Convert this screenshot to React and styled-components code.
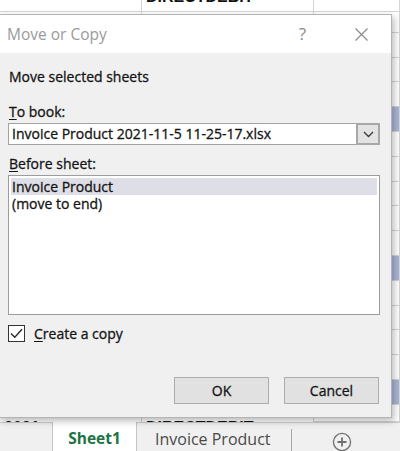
import styled, { createGlobalStyle } from 'styled-components';

const GlobalStyle = createGlobalStyle`
   body {
      margin: 0;
      background: #ffffff;
      font-family: 'Open Sans', 'Noto Sans', sans-serif;
   }
`;

// row heights of the worksheet behind the dialog
const rows = [
   { h: 25, b: 'DIRECTDEBIT', bold: true, up: true },
   { h: 20.8 },
   { h: 24.8 },
   { h: 24.8 },
   { h: 24.8 },
   { h: 24.8, blue: true },
   { h: 24.8 },
   { h: 24.8 },
   { h: 24.8 },
   { h: 24.8 },
   { h: 24.8 },
   { h: 24.8, blue: true },
   { h: 24.8 },
   { h: 24.8 },
   { h: 24.8 },
   { h: 24.8 },
   { h: 24.8, blue: true },
   { h: 17.2, a: '2021', b: 'DIRECTDEBIT', low: true }
];

const sheets = ['Invoice Product', '(move to end)'];

export default function App() {
   return (
      <>
         <GlobalStyle />
         <Page>
            <Sheet>
               <Grid>
                  {rows.map((r, i) => (
                     <Row key={i} style={{ height: r.h }}>
                        <Cell $low={r.low}>{r.a}</Cell>
                        <Cell $bold={r.bold} $low={r.low} $up={r.up}>
                           {r.b}
                        </Cell>
                        <Cell $blue={r.blue} />
                     </Row>
                  ))}
               </Grid>
            </Sheet>

            <TabBar>
               <TabSpacer />
               <ActiveTab>Sheet1</ActiveTab>
               <Tab>Invoice Product</Tab>
               <TabSeparator />
               <AddSheet>
                  <svg width="20" height="20" viewBox="0 0 20 20">
                     <circle cx="10" cy="10" r="8.6" fill="none" stroke="#6f6f6f" strokeWidth="1.3" />
                     <path d="M10 5.5v9M5.5 10h9" stroke="#6f6f6f" strokeWidth="1.8" />
                  </svg>
               </AddSheet>
            </TabBar>

            <Dialog>
               <TitleBar>
                  <Title>Move or Copy</Title>
                  <Help>?</Help>
                  <CloseIcon width="13" height="13" viewBox="0 0 13 13">
                     <path d="M0.5 0.5l12 12M12.5 0.5l-12 12" stroke="#8a8a8a" strokeWidth="1.2" />
                  </CloseIcon>
               </TitleBar>

               <Body>
                  <Label $top={15}>Move selected sheets</Label>
                  <Label $top={17}>
                     <u>T</u>o book:
                  </Label>
                  <Combo>
                     <ComboText>Invoice Product 2021-11-5 11-25-17.xlsx</ComboText>
                     <ComboButton>
                        <svg width="11" height="7" viewBox="0 0 11 7">
                           <path d="M1 1l4.5 4.5L10 1" fill="none" stroke="#3c3c3c" strokeWidth="1.4" />
                        </svg>
                     </ComboButton>
                  </Combo>

                  <Label $top={10}>
                     <u>B</u>efore sheet:
                  </Label>
                  <ListBox>
                     {sheets.map((s, i) => (
                        <ListItem key={s} $selected={i === 0}>
                           {s}
                        </ListItem>
                     ))}
                  </ListBox>

                  <CheckRow>
                     <CheckBox>
                        <svg width="13" height="11" viewBox="0 0 13 11">
                           <path d="M1 5.5l3.8 3.8L12 1.2" fill="none" stroke="#262626" strokeWidth="1.3" />
                        </svg>
                     </CheckBox>
                     <CheckLabel>
                        <u>C</u>reate a copy
                     </CheckLabel>
                  </CheckRow>

                  <Buttons>
                     <Button>OK</Button>
                     <Button>Cancel</Button>
                  </Buttons>
               </Body>
            </Dialog>
         </Page>
      </>
   );
}

const Page = styled.div`
   position: relative;
   width: 400px;
   height: 451px;
   overflow: hidden;
   background: #ffffff;
`;

const Sheet = styled.div`
   height: 422px;
   overflow: hidden;
`;

const Grid = styled.div`
   margin-top: -13px;
`;

const Row = styled.div`
   display: grid;
   grid-template-columns: 142px 172px 1fr;
   box-sizing: border-box;
   overflow: hidden;
`;

const Cell = styled.div`
   box-sizing: border-box;
   border-right: 1px solid #d4d4d4;
   border-bottom: ${(p) => (p.$low ? 'none' : '1px solid #d4d4d4')};
   padding: ${(p) => (p.$low ? '14px 0 0 4px' : '0 0 0 4px')};
   display: flex;
   align-items: ${(p) => (p.$low ? 'flex-start' : 'center')};
   overflow: hidden;
   white-space: nowrap;
   font-family: 'Liberation Sans', sans-serif;
   font-size: 16px;
   line-height: 18px;
   font-weight: ${(p) => (p.$bold || p.$low ? 700 : 400)};
   color: #111111;
   background: ${(p) => (p.$blue ? '#aab6d8' : 'transparent')};
   margin-top: ${(p) => (p.$up ? '-5px' : '0')};
`;

const TabBar = styled.div`
   display: flex;
   align-items: stretch;
   height: 29px;
   box-sizing: border-box;
   border-top: 1px solid #cdcdcd;
   background: #f0f0f0;
`;

const TabSpacer = styled.div`
   width: 52px;
`;

const ActiveTab = styled.div`
   box-sizing: border-box;
   width: 85px;
   margin-top: -1px;
   padding-top: 6px;
   text-align: center;
   background: #ffffff;
   border-left: 1px solid #c4c4c4;
   border-right: 1px solid #c4c4c4;
   font-size: 15.5px;
   font-weight: 700;
   line-height: 20px;
   color: #217346;
`;

const Tab = styled.div`
   box-sizing: border-box;
   width: 154px;
   padding: 6px 0 0 18px;
   font-size: 16px;
   line-height: 20px;
   color: #4a4a4a;
`;

const TabSeparator = styled.div`
   width: 1px;
   margin-top: 6px;
   background: #a8a8a8;
`;

const AddSheet = styled.div`
   margin: 9px 0 0 40px;
   width: 20px;
   height: 20px;
`;

const Dialog = styled.div`
   position: absolute;
   left: -2px;
   top: 14px;
   width: 394px;
   height: 404px;
   box-sizing: border-box;
   border: 1px solid #b4b4b4;
   background: #f0f0f0;
   box-shadow: 2px 3px 7px rgba(0, 0, 0, 0.28);
   display: flex;
   flex-direction: column;
`;

const TitleBar = styled.div`
   height: 38px;
   display: flex;
   align-items: center;
   background: #ffffff;
   padding: 0 23px 0 8px;
`;

const Title = styled.div`
   flex: 1;
   font-size: 15.5px;
   color: #9a9a9a;
`;

const Help = styled.div`
   font-size: 17px;
   color: #8a8a8a;
   margin-right: 49px;
   margin-top: -2px;
`;

const CloseIcon = styled.svg`
   display: block;
`;

const Body = styled.div`
   flex: 1;
   display: flex;
   flex-direction: column;
   padding: 0 11px 0 9px;
   color: #141414;
   font-size: 14px;
   -webkit-text-stroke: 0.3px #141414;
`;

const Label = styled.div`
   margin-top: ${(p) => p.$top}px;
   padding-left: 1px;
   line-height: 18px;

   u {
      text-underline-offset: 2px;
   }
`;

const Combo = styled.div`
   display: flex;
   height: 22px;
   margin-top: 2px;
   box-sizing: border-box;
   border: 1px solid #a3a3a3;
   background: #ffffff;
`;

const ComboText = styled.div`
   flex: 1;
   padding-left: 3px;
   line-height: 20px;
   white-space: nowrap;
   overflow: hidden;
`;

const ComboButton = styled.div`
   width: 24px;
   box-sizing: border-box;
   margin: -1px -1px -1px 0;
   border: 2px solid #a8a8a8;
   background: #e3e3e3;
   display: flex;
   align-items: center;
   justify-content: center;
`;

const ListBox = styled.div`
   height: 140px;
   margin-top: 2px;
   box-sizing: border-box;
   border: 1px solid #9c9c9c;
   background: #ffffff;
   padding: 2px;
`;

const ListItem = styled.div`
   height: 17px;
   line-height: 17px;
   padding-left: 1px;
   background: ${(p) => (p.$selected ? '#dedee6' : 'transparent')};
`;

const CheckRow = styled.div`
   display: flex;
   align-items: center;
   margin-top: 10px;
   height: 17px;
`;

const CheckBox = styled.div`
   width: 17px;
   height: 17px;
   box-sizing: border-box;
   border: 1px solid #333333;
   background: #ffffff;
   display: flex;
   align-items: center;
   justify-content: center;
`;

const CheckLabel = styled.div`
   margin-left: 9px;
   line-height: 18px;

   u {
      text-underline-offset: 2px;
   }
`;

const Buttons = styled.div`
   display: flex;
   justify-content: flex-end;
   gap: 15px;
   margin-top: 35px;
   padding-right: 1px;
`;

const Button = styled.div`
   width: 95px;
   height: 27px;
   box-sizing: border-box;
   border: 1px solid #adadad;
   background: #e1e1e1;
   display: flex;
   align-items: center;
   justify-content: center;
   font-size: 14px;
   color: #141414;
`;
